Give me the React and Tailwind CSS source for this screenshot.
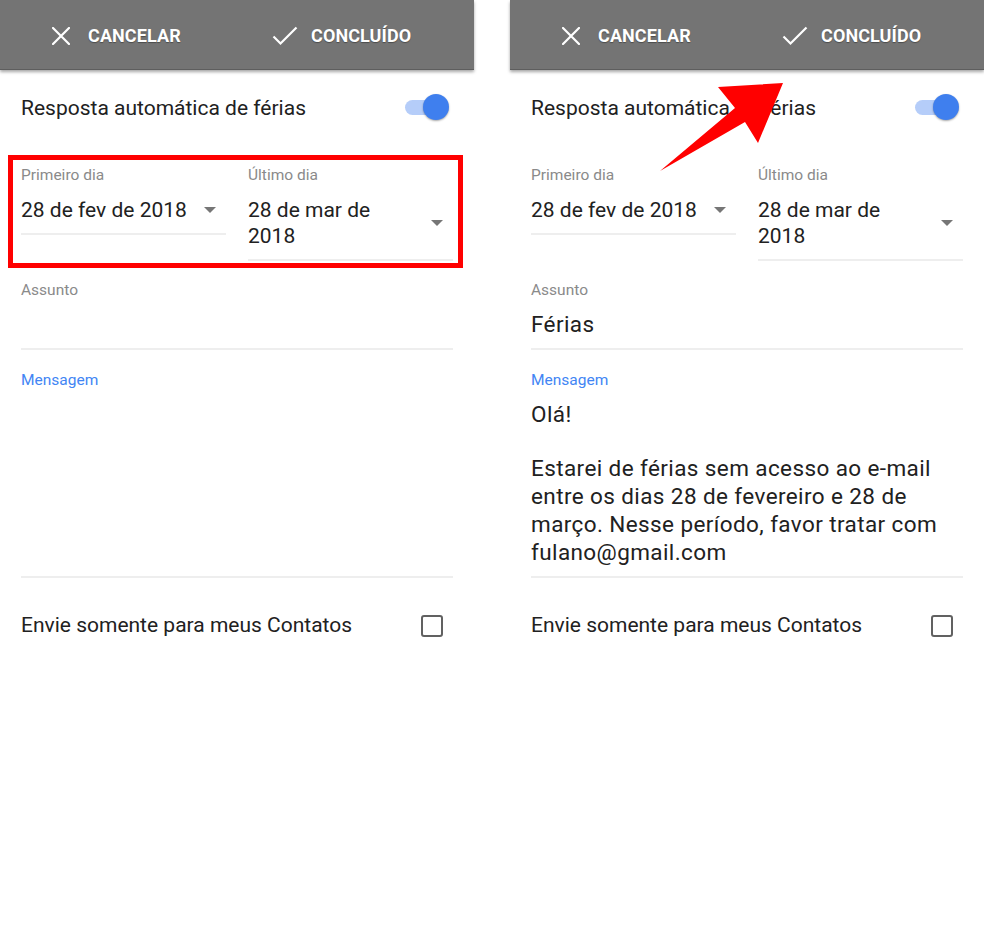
import React from "react";

const font = { fontFamily: "Roboto, 'Noto Sans', 'Liberation Sans', sans-serif" };

function Triangle() {
  return (
    <svg width="12" height="6" viewBox="0 0 12 6" className="shrink-0">
      <path d="M0 0 L12 0 L6 6 Z" fill="#767676" />
    </svg>
  );
}

function Header() {
  return (
    <div className="relative h-[70px] bg-[#747474] shadow-[0_2px_3px_rgba(0,0,0,0.35)] border-b border-[#5e5e5e] flex items-center pl-[52px] pt-[2px] text-white">
      <div className="w-[220px] flex items-center">
        <svg width="18" height="18" viewBox="0 0 18 18" className="shrink-0">
          <path d="M1 1 L17 17 M17 1 L1 17" stroke="white" strokeWidth="2.2" strokeLinecap="square" />
        </svg>
        <span className="ml-[18px] text-[18px] font-bold tracking-[0.1px] [text-shadow:0_1px_1px_rgba(0,0,0,0.35)]">CANCELAR</span>
      </div>
      <div className="flex items-center">
        <svg width="26" height="20" viewBox="0 0 26 20" className="shrink-0">
          <path d="M1.5 10.5 L8.5 17.5 L24.5 1.5" stroke="white" strokeWidth="2.2" fill="none" />
        </svg>
        <span className="ml-[13px] text-[18px] font-bold tracking-[0.1px] [text-shadow:0_1px_1px_rgba(0,0,0,0.35)]">CONCLUÍDO</span>
      </div>
    </div>
  );
}

function Panel({ filled }) {
  return (
    <div className="w-[474px] bg-white shrink-0" style={font}>
      <Header />
      <div className="px-[21px]">
        <div className="h-[74px] flex items-center justify-between">
          <span className="text-[21px] text-[#212121] pt-[4px]">Resposta automática de férias</span>
          <div className="relative w-[44px] h-[28px] mr-[4px]">
            <div className="absolute left-0 top-[7px] w-[36px] h-[15px] rounded-full bg-[#b5cdf9]" />
            <div className="absolute right-0 top-[1px] w-[26px] h-[26px] rounded-full bg-[#3f7fee] shadow-[0_1px_2px_rgba(0,0,0,0.35)]" />
          </div>
        </div>

        <div className="mt-[22px] grid grid-cols-2 gap-[22px] items-start">
          <div>
            <div className="text-[15.5px] leading-[18px] text-[#8a8a8a]">Primeiro dia</div>
            <div className="mt-[13px] pb-[10px] border-b-2 border-[#eeeeee] flex items-center justify-between pr-[10px]">
              <span className="text-[21px] leading-[26px] text-[#212121]">28 de fev de 2018</span>
              <Triangle />
            </div>
          </div>
          <div>
            <div className="text-[15.5px] leading-[18px] text-[#8a8a8a]">Último dia</div>
            <div className="mt-[13px] pb-[10px] border-b-2 border-[#eeeeee] flex items-center justify-between pr-[10px]">
              <span className="text-[21px] leading-[26px] text-[#212121] w-[150px]">28 de mar de 2018</span>
              <Triangle />
            </div>
          </div>
        </div>

        <div className="mt-[20px]">
          <div className="text-[15.5px] leading-[18px] text-[#8a8a8a]">Assunto</div>
          <div className="mt-[12px] border-b-2 border-[#eeeeee] h-[39px]">
            <span className="text-[22.5px] leading-[26px] tracking-[0.4px] text-[#212121]">{filled ? "Férias" : ""}</span>
          </div>
        </div>

        <div className="mt-[21px]">
          <div className="text-[15.5px] leading-[18px] text-[#4285f4]">Mensagem</div>
          <div className="mt-[11px] border-b-2 border-[#eeeeee] h-[178px] text-[22.5px] leading-[28px] tracking-[0.4px] text-[#212121]">
            {filled && (
              <>
                <div>Olá!</div>
                <div className="h-[26px]" />
                <div>Estarei de férias sem acesso ao e-mail entre os dias 28 de fevereiro e 28 de março. Nesse período, favor tratar com fulano@gmail.com</div>
              </>
            )}
          </div>
        </div>

        <div className="mt-[20px] h-[56px] flex items-center justify-between">
          <span className="text-[21px] text-[#212121]">Envie somente para meus Contatos</span>
          <div className="w-[22px] h-[22px] border-2 border-[#616161] rounded-[3px] mr-[10px]" />
        </div>
      </div>
    </div>
  );
}

export default function App() {
  return (
    <div className="relative w-[984px] h-[942px] bg-white overflow-hidden flex gap-[36px]" style={font}>
      <Panel filled={false} />
      <Panel filled={true} />
      <div className="absolute left-[8px] top-[155px] w-[455px] h-[113px] border-[5px] border-[#ff0000]" />
      <svg className="absolute left-0 top-0" width="984" height="942" viewBox="0 0 984 942">
        <polygon points="783,83 718,87 735,108 660,171 745,122 758,143" fill="#ff0000" />
      </svg>
    </div>
  );
}
